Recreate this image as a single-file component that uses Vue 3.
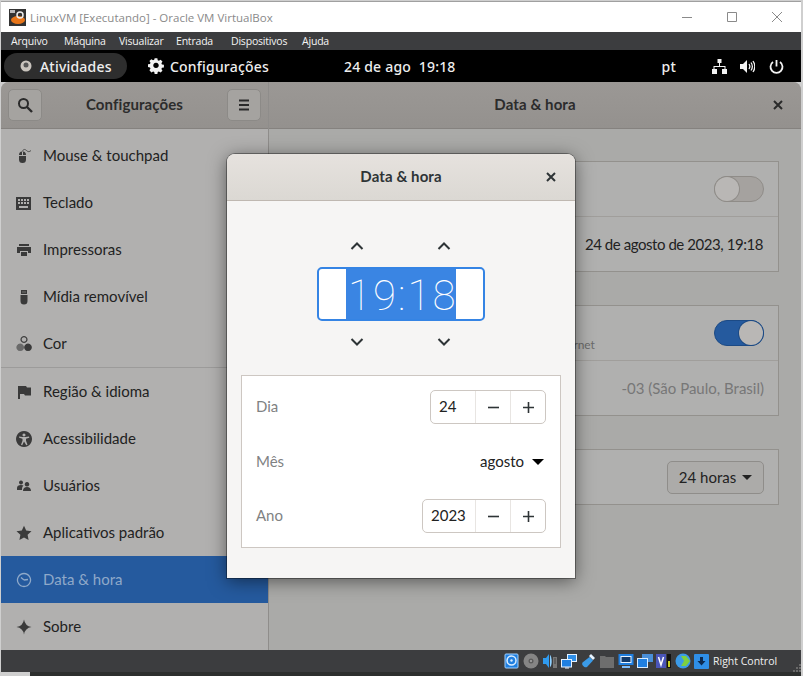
<script setup>
// width is the slot each menu entry takes up to the next one
const menus = [
  { label: 'Arquivo', width: 53 },
  { label: 'Máquina', width: 55 },
  { label: 'Visualizar', width: 57 },
  { label: 'Entrada', width: 55 },
  { label: 'Dispositivos', width: 71 },
  { label: 'Ajuda', width: 40 }
];

// sidebar rows, icons are 16x16 fills, s is an extra stroke, d2 a lighter fill
const groupA = [
  { label: 'Mouse & touchpad', d: 'M3 8h7v3.500a3.500 3.500 0 0 1-7 0zM3 7a3.500 3.500 0 0 1 3-3.400V7zM7 3.600A3.500 3.500 0 0 1 10 7H7z', s: 'M6.500 3.500C7 1 9 1 10.500 2.500s3 1.500 4.500 0' },
  { label: 'Teclado', d: 'M0 2h15v13H0zM2 4v2h2V4zm3 0v2h2V4zm3 0v2h2V4zm3 0v2h2V4zM2 7v2h2V7zm3 0v2h2V7zm3 0v2h2V7zm3 0v2h2V7zM3 11v2h9v-2z' },
  { label: 'Impressoras', d: 'M3 2h10v2H3zM1 5h14v6h-3V9H4v2H1zM5 10h6v4H5z' },
  { label: 'Mídia removível', d: 'M5 1h6v4H5zM4.500 6h7v6a3.500 3.500 0 0 1-7 0zM6.500 2.500v1h1v-1zm2 0v1h1v-1z' },
  { label: 'Cor', d: 'M8 0a3.500 3.500 0 1 0 .01 0zM8 1.200a2.300 2.300 0 1 1-.01 0zM12 7.500a3.800 3.800 0 1 0 .01 0z', d2: 'M4.200 7.500a3.800 3.800 0 1 0 .01 0z' }
];
const groupB = [
  { label: 'Região & idioma', d: 'M2 2h8l1 1.500h4v8H9l-1-1.500H4v5H2z' },
  { label: 'Acessibilidade', d: 'M8 0a8 8 0 1 0 .01 0zM8 2.500a1.500 1.500 0 1 1-.01 0zM3 5.500l3.500.5h3l3.500-.5.300 1.200-3.300 1v2l1.500 4-1.200.5L8 10.500l-1.800 3.700-1.200-.5 1.500-4v-2l-3.300-1z' },
  { label: 'Usuários', d: 'M5 2.500a2 2 0 1 0 .01 0zM1 10c0-2 1.500-3 4-3 1 0 2 .2 2.500.6C6.500 8.500 6 9.500 6 12H1zM11 4a2.300 2.300 0 1 0 .01 0zM7 13c0-2.500 1.500-4 4-4s4 1.500 4 4z' },
  { label: 'Aplicativos padrão', d: 'M8 .8l2.200 4.800 5.300.6-3.900 3.600 1 5.200L8 12.400 3.400 15l1-5.200L.5 6.200l5.300-.6z' },
  { label: 'Data & hora', active: true, s: 'M8 1.500a6.500 6.500 0 1 0 .01 0zM8 8l4-.5M8 8L5 5.500' },
  { label: 'Sobre', d: 'M8 .5Q9 7 15.500 8 9 9 8 15.500 7 9 .5 8 7 7 8 .5z' }
];

const spins = [
  { label: 'Dia', value: '24', width: 44 },
  { label: 'Mês', value: 'agosto' },
  { label: 'Ano', value: '2023', width: 52 }
];
</script>

<template>
  <div class="screen">
    <div class="vm-title">
      <svg class="vm-logo" width="17" height="17" viewBox="0 0 17 17">
        <rect width="17" height="17" fill="#333" />
        <rect x="1" y="1" width="5" height="3" fill="#bbb" />
        <ellipse cx="9" cy="11" rx="7" ry="4" fill="#e8761a" />
        <circle cx="11" cy="6" r="3" fill="none" stroke="#eee" stroke-width="1.500" />
      </svg>
      <span class="vm-name">LinuxVM [Executando] - Oracle VM VirtualBox</span>
      <div class="vm-controls">
        <svg width="12" height="12" viewBox="0 0 12 12"><path d="M1 6.500h10" stroke="#8a8a8a" /></svg>
        <svg width="12" height="12" viewBox="0 0 12 12"><path d="M1.500 1.500h9v9h-9z" fill="none" stroke="#8a8a8a" /></svg>
        <svg width="12" height="12" viewBox="0 0 12 12"><path d="M1 1l10 10M11 1L1 11" stroke="#8a8a8a" /></svg>
      </div>
    </div>

    <div class="vm-menu">
      <span v-for="m in menus" :key="m.label" :style="{ width: m.width + 'px' }">{{ m.label }}</span>
    </div>

    <div class="gnome-bar">
      <div class="activities">
        <svg width="12" height="12" viewBox="0 0 12 12"><circle cx="6" cy="6" r="5.500" fill="#c9c4bd" /><circle cx="6" cy="5" r="2.500" fill="#555" /></svg>
        <span>Atividades</span>
      </div>
      <div class="app-menu">
        <svg width="16" height="16" viewBox="0 0 16 16"><path fill-rule="evenodd" fill="#f2f2f2" d="M6.500 0h3l.4 2.200 1.300.6 1.900-1.200 2.100 2.100-1.200 1.900.6 1.300 2.200.4v3l-2.200.4-.6 1.300 1.200 1.900-2.100 2.100-1.900-1.200-1.300.6-.4 2.200h-3l-.4-2.200-1.300-.6-1.900 1.200L.7 13.400l1.200-1.900-.6-1.300L-.9 9.800v-3l2.200-.4.600-1.300L.7 3.200l2.100-2.100 1.900 1.200 1.300-.6zM8 5a3 3 0 1 0 .01 0z" transform="translate(.8 .2) scale(.9)" /></svg>
        <span>Configurações</span>
      </div>
      <div class="clock">24 de ago&nbsp;&nbsp;19:18</div>
      <div class="tray">
        <span class="lang">pt</span>
        <svg class="net" width="15" height="15" viewBox="0 0 15 15"><path fill="#f2f2f2" d="M5.500 0h4v4h-4zM7 4h1v3h5.500v3h-1V8h-10v2h-1V7H7zM0 10h5v5H0zM10 10h5v5h-5z" /></svg>
        <svg width="15" height="15" viewBox="0 0 15 15"><path fill="#f2f2f2" d="M0 5h3l4-4v13l-4-4H0z" /><path fill="none" stroke="#f2f2f2" stroke-width="1.300" d="M9 5c1 1.500 1 3.500 0 5M11 3.500c1.700 2.500 1.700 5.500 0 8M13 2c2.300 3.500 2.300 7.500 0 11" /></svg>
        <svg width="15" height="15" viewBox="0 0 15 15"><path fill="none" stroke="#f2f2f2" stroke-width="1.800" d="M7.500 1v6.500M4 3a6 6 0 1 0 7 0" /></svg>
      </div>
    </div>

    <div class="window">
      <aside class="sidebar">
        <header class="head">
          <button class="head-btn">
            <svg width="16" height="16" viewBox="0 0 16 16"><circle cx="6.500" cy="6.500" r="4.500" fill="none" stroke="#2a2a2a" stroke-width="2" /><path d="M10 10l5 5" stroke="#2a2a2a" stroke-width="2.400" /></svg>
          </button>
          <h1>Configurações</h1>
          <button class="head-btn">
            <svg width="12" height="12" viewBox="0 0 12 12"><path d="M1 1.500h10M1 6h10M1 10.500h10" stroke="#2a2a2a" stroke-width="1.800" /></svg>
          </button>
        </header>
        <ul class="list first">
          <li v-for="item in groupA" :key="item.label">
            <svg width="16" height="16" viewBox="0 0 16 16">
              <path v-if="item.d2" :d="item.d2" fill="#6a6a6a" />
              <path v-if="item.d" :d="item.d" fill="#3a3a3a" fill-rule="evenodd" />
              <path v-if="item.s" :d="item.s" fill="none" stroke="#3a3a3a" stroke-width=".8" />
            </svg>
            <span>{{ item.label }}</span>
          </li>
        </ul>
        <ul class="list">
          <li v-for="item in groupB" :key="item.label" :class="{ active: item.active }">
            <svg width="16" height="16" viewBox="0 0 16 16">
              <path v-if="item.d" :d="item.d" fill="#3a3a3a" fill-rule="evenodd" />
              <path v-if="item.s" :d="item.s" fill="none" stroke="currentColor" stroke-width="1.300" />
            </svg>
            <span>{{ item.label }}</span>
          </li>
        </ul>
      </aside>

      <section class="panel">
        <header class="head right">
          <h1>Data &amp; hora</h1>
          <svg class="close" width="10" height="10" viewBox="0 0 10 10"><path d="M1 1l8 8M9 1L1 9" stroke="#2a2a2a" stroke-width="2" /></svg>
        </header>
        <div class="frames">
          <div class="frame">
            <div class="row">
              <div class="row-text"></div>
              <div class="switch"><i></i></div>
            </div>
            <div class="row">
              <div class="row-text"></div>
              <span class="value">24 de agosto de 2023, 19:18</span>
            </div>
          </div>
          <div class="frame">
            <div class="row">
              <div class="row-text">
                <small>Requer serviços de localização ativos e acesso à internet</small>
              </div>
              <div class="switch on"><i></i></div>
            </div>
            <div class="row">
              <div class="row-text"></div>
              <span class="value dim">-03 (São Paulo, Brasil)</span>
            </div>
          </div>
          <div class="frame">
            <div class="row">
              <div class="row-text"></div>
              <div class="combo">24 horas <b class="tri"></b></div>
            </div>
          </div>
        </div>
      </section>
    </div>

    <div class="vm-status">
      <!-- hard disk -->
      <svg width="16" height="16" viewBox="0 0 16 16"><rect x="1" y="1" width="13" height="14" rx="1" fill="#1f7fe0" stroke="#9fd0ff" /><circle cx="7.500" cy="7.500" r="4.500" fill="none" stroke="#d8ecff" stroke-width="1.500" /><circle cx="7.500" cy="7.500" r="1.200" fill="#d8ecff" /></svg>
      <!-- optical disk -->
      <svg width="16" height="16" viewBox="0 0 16 16"><circle cx="8" cy="8" r="7.500" fill="#858585" /><circle cx="8" cy="8" r="2.500" fill="#5c5c5c" /><circle cx="8" cy="8" r="1" fill="#aaa" /></svg>
      <!-- audio -->
      <svg width="16" height="16" viewBox="0 0 16 16"><path d="M1 5h3l3-4v14l-3-4H1z" fill="#2f9bf0" /><path d="M8 2c2 1 2.500 11 0 12z" fill="#8fd0ff" /><rect x="11" y="4" width="4" height="11" fill="#777" /><path d="M12 6h2M12 8h2M12 10h2" stroke="#444" /></svg>
      <!-- network -->
      <svg width="16" height="16" viewBox="0 0 16 16"><rect x="6.500" y="1.500" width="9" height="7" fill="#2f8fe8" stroke="#e6f2ff" /><rect x=".5" y="6.500" width="10" height="7.500" fill="#1f7fe0" stroke="#e6f2ff" /><path d="M4 15h4" stroke="#e6f2ff" /></svg>
      <!-- usb -->
      <svg width="16" height="16" viewBox="0 0 16 16"><path d="M9.500 4l3.500 3.500-6 6.500c-2 1.500-6-2-4.500-4.500z" fill="#3b9be8" /><path d="M11 1l4 4-2 2-4-4z" fill="#e8f4ff" /></svg>
      <!-- shared folders -->
      <svg width="16" height="16" viewBox="0 0 16 16"><path d="M1 3h5l1 1h8v11H1z" fill="#6e6e6e" /></svg>
      <!-- display -->
      <svg width="16" height="16" viewBox="0 0 16 16"><rect x=".5" y="1" width="15" height="11" fill="#1f7fe0" /><rect x="3" y="3.500" width="10" height="6" fill="#123a6a" stroke="#e6f2ff" /><path d="M4 14h8" stroke="#7fc0ff" stroke-width="2" /></svg>
      <!-- capture -->
      <svg width="16" height="16" viewBox="0 0 16 16"><rect x="5" y="1" width="11" height="8" fill="#4a8fd8" /><rect x=".5" y="5.500" width="10" height="9" fill="#1f7fe0" stroke="#d8ecff" /></svg>
      <svg width="16" height="16" viewBox="0 0 16 16"><rect x="0" y="1" width="10" height="14" fill="#4a55b8" /><path d="M2.500 4l2.500 8 2.500-8" fill="none" stroke="#fff" stroke-width="1.500" /><rect x="11" y="1" width="4" height="14" fill="#111" /><rect x="12" y="8" width="2" height="6" fill="#c8d020" /></svg>
      <svg width="16" height="16" viewBox="0 0 16 16"><circle cx="8" cy="8" r="7.500" fill="#3b9be8" /><path d="M6 3h5l4 5-4 5H6l3-5z" fill="#7ed040" /></svg>
      <svg width="15" height="15" viewBox="0 0 15 15"><rect width="15" height="15" rx="1" fill="#2f8fe8" /><path d="M6 3h3v4h2.500l-4 4.500L3.500 7H6z" fill="#0d2a50" /></svg>
      <span>Right Control</span>
      <svg class="grip" width="8" height="8" viewBox="0 0 8 8"><path d="M6 0h2v2H6zM3 3h2v2H3zM6 3h2v2H6zM0 6h2v2H0zM3 6h2v2H3zM6 6h2v2H6z" fill="#6a6a6a" /></svg>
    </div>
    <div class="vm-bottom"></div>

    <div class="dialog">
      <header class="dialog-head">
        <h2>Data &amp; hora</h2>
        <svg class="close" width="10" height="10" viewBox="0 0 10 10"><path d="M1 1l8 8M9 1L1 9" stroke="#2e3436" stroke-width="2" /></svg>
      </header>
      <div class="dialog-body">
        <div class="arrows">
          <svg v-for="n in 2" :key="n" width="14" height="8" viewBox="0 0 14 8"><path d="M1.500 7L7 1.500 12.500 7" fill="none" stroke="#2e3436" stroke-width="2" /></svg>
        </div>
        <div class="time-box"><span class="time">19:18</span></div>
        <div class="arrows down">
          <svg v-for="n in 2" :key="n" width="14" height="8" viewBox="0 0 14 8"><path d="M1.500 1L7 6.500 12.500 1" fill="none" stroke="#2e3436" stroke-width="2" /></svg>
        </div>
        <div class="date-frame">
          <div v-for="r in spins" :key="r.label" class="date-row">
            <span class="date-label">{{ r.label }}</span>
            <div v-if="r.width" class="spin">
              <span class="spin-value" :style="{ width: r.width + 'px' }">{{ r.value }}</span>
              <span class="spin-btn"><svg width="11" height="11" viewBox="0 0 11 11"><path d="M0 5.500h11" stroke="#2e3436" stroke-width="1.600" /></svg></span>
              <span class="spin-btn"><svg width="11" height="11" viewBox="0 0 11 11"><path d="M0 5.500h11M5.500 0v11" stroke="#2e3436" stroke-width="1.600" /></svg></span>
            </div>
            <div v-else class="month"><span>{{ r.value }}</span> <b class="tri big"></b></div>
          </div>
        </div>
      </div>
    </div>
  </div>
</template>

<style>
html, body { margin: 0; padding: 0; background: #d0d0d0; overflow: hidden; }
</style>

<style scoped>
.screen {
  position: relative;
  width: 803px;
  height: 676px;
  box-sizing: border-box;
  padding: 1px 2px 0 1px;
  display: flex;
  flex-direction: column;
  overflow: hidden;
  background: #cfcfcf;
  font-family: Lato, "Noto Sans", sans-serif;
  font-size: 15px;
  color: #222;
}
h1, h2 {
  margin: 0 0 2px;
  font-size: 15px;
  font-weight: 700;
  letter-spacing: .1px;
}
button { padding: 0; font: inherit; }

.vm-title {
  height: 31px;
  box-sizing: border-box;
  border-top: 1px solid #a0a0a0;
  background: #fff;
  display: flex;
  align-items: center;
  padding-left: 8px;
  font-family: "Open Sans", sans-serif;
  font-size: 11.500px;
  color: #8a8a8a;
}
.vm-logo { margin-right: 4px; }
.vm-controls {
  margin-left: auto;
  margin-right: 18px;
  display: flex;
  gap: 33px;
}
.vm-menu {
  height: 18px;
  background: #3c3d3f;
  display: flex;
  align-items: center;
  padding-left: 10px;
  font-family: "Open Sans", sans-serif;
  font-size: 10.500px;
  letter-spacing: -.2px;
  color: #f4f4f4;
  white-space: nowrap;
}
.gnome-bar {
  height: 32px;
  background: #000;
  display: flex;
  align-items: center;
  color: #eee;
  font-family: "Noto Sans", sans-serif;
  font-weight: 500;
  font-size: 14px;
  letter-spacing: .2px;
}
.activities {
  width: 123px;
  height: 26px;
  margin-left: 3px;
  box-sizing: border-box;
  padding-left: 16px;
  border-radius: 13px;
  background: #2e2e2e;
  display: flex;
  align-items: center;
  gap: 8px;
}
.app-menu {
  margin-left: 21px;
  display: flex;
  align-items: center;
  gap: 6px;
}
.clock { margin-left: 75px; }
.tray {
  margin-left: auto;
  margin-right: 17px;
  display: flex;
  align-items: center;
  gap: 14px;
}
.lang { margin-right: 22px; }
.net { margin-right: -1px; }

.window {
  height: 568px;
  display: flex;
  border-radius: 8px 8px 0 0;
  overflow: hidden;
  background: #aaaaa8;
}
.head {
  height: 47px;
  box-sizing: border-box;
  flex: none;
  background: linear-gradient(#9b9895, #94918e);
  border-bottom: 1px solid #85827f;
  display: flex;
  align-items: center;
  justify-content: space-between;
  padding: 0 7px;
  color: #2c2c2c;
}
.sidebar {
  width: 268px;
  flex: none;
  box-sizing: border-box;
  border-right: 1px solid #8f8d8b;
  background: #b1b0af;
  display: flex;
  flex-direction: column;
}
.head-btn {
  width: 34px;
  height: 32px;
  border: 1px solid #8c8a87;
  border-radius: 5px;
  background: #a5a3a0;
  display: flex;
  align-items: center;
  justify-content: center;
}
.list {
  margin: 0;
  padding: 0;
  list-style: none;
}
.list.first {
  padding-top: 3px;
  border-bottom: 1px solid #9c9b9a;
}
.list li {
  height: 47px;
  display: flex;
  align-items: center;
  gap: 12px;
  padding-left: 15px;
}
.list li span {
  margin: 0 0 2px -1px;
}
.list li.active {
  background: #255a9e;
  color: #8fa9c9;
}
.panel {
  flex: 1;
  display: flex;
  flex-direction: column;
}
.head.right {
  position: relative;
  justify-content: center;
}
.head.right .close {
  position: absolute;
  right: 18px;
}
.frames {
  padding: 32px 22px 0 22px;
  display: flex;
  flex-direction: column;
  gap: 33px;
}
.frame {
  border: 1px solid #93918d;
  background: #b0b0af;
}
.row {
  height: 54px;
  display: flex;
  align-items: center;
  justify-content: space-between;
  padding: 0 14px 0 12px;
}
.row + .row { border-top: 1px solid #a09e9b; }
.row-text {
  display: flex;
  flex-direction: column;
  white-space: nowrap;
}
.row-text small {
  margin-top: 22px;
  font-size: 12px;
  letter-spacing: -.07px;
  color: #6a6a6a;
}
.value {
  margin: 0 1px 1px 0;
  white-space: nowrap;
  font-size: 15px;
  letter-spacing: -.44px;
}
.value.dim {
  margin-right: 0;
  color: #777;
  letter-spacing: 0;
}
.switch {
  width: 50px;
  height: 26px;
  box-sizing: border-box;
  border: 1px solid #8f8c88;
  border-radius: 13px;
  background: #a5a29f;
  display: flex;
}
.switch i {
  width: 24px;
  height: 24px;
  border-radius: 50%;
  background: #b9b7b5;
  box-shadow: 0 0 0 1px #8f8c88;
}
.switch.on {
  background: #255a9e;
  border-color: #1c4a85;
  justify-content: flex-end;
}
.switch.on i { box-shadow: 0 0 0 1px #1c4a85; }
.combo {
  width: 97px;
  height: 33px;
  box-sizing: border-box;
  border: 1px solid #8f8d8a;
  border-radius: 5px;
  background: #acaba9;
  display: flex;
  align-items: center;
  justify-content: center;
  gap: 6px;
}
.tri {
  width: 0;
  height: 0;
  border-left: 5px solid transparent;
  border-right: 5px solid transparent;
  border-top: 5px solid #222;
}
.tri.big {
  border-left-width: 6px;
  border-right-width: 6px;
  border-top-width: 6px;
  border-top-color: #000;
}

.vm-status {
  height: 22px;
  background: #3c3d3f;
  display: flex;
  align-items: center;
  gap: 3px;
  padding-left: 503px;
  font-family: "Open Sans", sans-serif;
  font-size: 10.500px;
  color: #f0f0f0;
}
.vm-status span { margin-left: 1px; }
.grip {
  margin-left: auto;
  align-self: flex-end;
}
.vm-bottom {
  flex: 1;
  background: #2d2f2e;
  margin-left: 29px;
}

.dialog {
  position: absolute;
  left: 227px;
  top: 154px;
  width: 348px;
  height: 424px;
  border-radius: 8px 8px 0 0;
  overflow: hidden;
  background: #f6f5f4;
  box-shadow: 0 0 0 1px rgba(0, 0, 0, .35), 0 3px 18px rgba(0, 0, 0, .5);
  display: flex;
  flex-direction: column;
  color: #2e3436;
}
.dialog-head {
  position: relative;
  height: 47px;
  box-sizing: border-box;
  border-bottom: 1px solid #bfb8b1;
  background: linear-gradient(#e6e2de, #dbd8d3);
  display: flex;
  align-items: center;
  justify-content: center;
}
.dialog-head .close {
  position: absolute;
  right: 19px;
}
.dialog-body {
  flex: 1;
  padding: 0 14px;
  display: flex;
  flex-direction: column;
  align-items: center;
}
.arrows {
  margin: 41px 2px 0 0;
  display: flex;
  gap: 73px;
}
.arrows.down { margin-top: 17px; }
.time-box {
  margin-top: 17px;
  width: 168px;
  height: 54px;
  box-sizing: border-box;
  border: 2px solid #3584e4;
  border-radius: 5px;
  background: #fff;
  display: flex;
  justify-content: center;
}
.time {
  width: 110px;
  background: #3a85e3;
  color: #fff;
  font-family: Roboto, sans-serif;
  font-weight: 100;
  font-size: 42px;
  letter-spacing: 2px;
  text-indent: 2px;
  line-height: 54px;
  text-align: center;
}
.date-frame {
  margin-top: 29px;
  width: 320px;
  box-sizing: border-box;
  border: 1px solid #cdc7c2;
  background: #fff;
  padding: 14px;
  display: flex;
  flex-direction: column;
  gap: 20.500px;
}
.date-row {
  height: 34px;
  display: flex;
  align-items: center;
  justify-content: space-between;
}
.date-label {
  margin-bottom: 2px;
  color: #7f8283;
}
.spin {
  height: 34px;
  box-sizing: border-box;
  border: 1px solid #cdc7c2;
  border-radius: 5px;
  display: flex;
}
.spin-value {
  box-sizing: border-box;
  padding-left: 8px;
  line-height: 30px;
  color: #222;
}
.spin-btn {
  box-sizing: border-box;
  width: 35px;
  border-left: 1px solid #e8e5e2;
  display: flex;
  align-items: center;
  justify-content: center;
}
.month {
  display: flex;
  align-items: center;
  gap: 8px;
  color: #222;
  padding-right: 2px;
}
.month span { margin-bottom: 2px; }
</style>
